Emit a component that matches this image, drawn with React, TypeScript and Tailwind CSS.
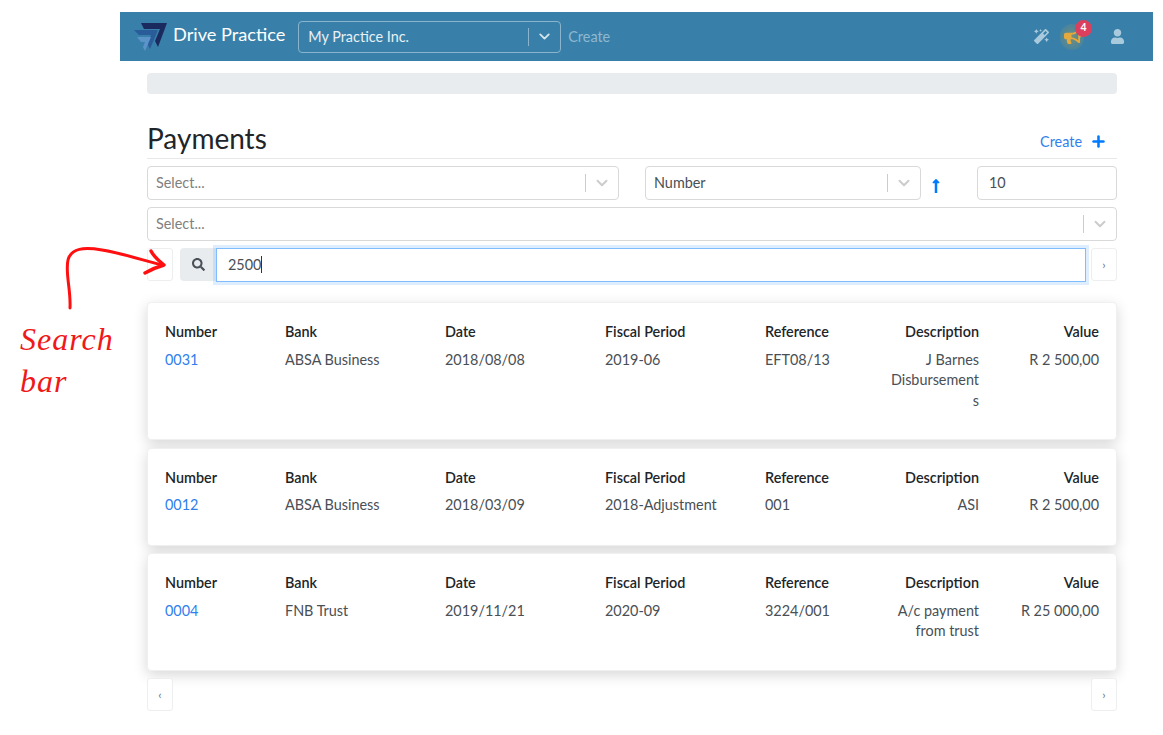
import React from "react";
import { ChevronDown, Plus } from "lucide-react";
import { FaMagic, FaBullhorn, FaUser, FaSearch, FaLongArrowAltUp } from "react-icons/fa";

function Logo() {
  return (
    <svg width="34" height="30" viewBox="0 0 34 30">
      <path d="M7 1 H33 L24 25 L21 19 L26 7 H10 Z" fill="#1a2a5e" />
      <path d="M0 8 H24 L16 27 L13 21 L17 13 H5 Z" fill="#2a5c9a" />
      <path d="M3 15 H17 L11 29 L9 25 L11 20 H7 Z" fill="#5c93c9" />
    </svg>
  );
}

function Select({ text, placeholder, className }: { text: string; placeholder?: boolean; className: string }) {
  return (
    <div className={`flex h-[34px] items-center rounded-[4px] border border-[#d9d9d9] bg-white pl-[8px] ${className}`}>
      <span className={`flex-1 text-[14.4px] ${placeholder ? "text-[#808080]" : "text-[#4a4f55]"}`}>{text}</span>
      <span className="h-[18px] w-px bg-[#cccccc]" />
      <span className="flex w-[32px] justify-center text-[#cccccc]">
        <ChevronDown size={18} strokeWidth={2.6} />
      </span>
    </div>
  );
}

function PageButton({ label, className = "" }: { label?: string; className?: string }) {
  return (
    <div className={`flex h-[33px] w-[26px] shrink-0 items-center justify-center rounded-[3px] border border-[#eceef0] bg-white text-[12px] text-[#6c757d] ${className}`}>
      {label}
    </div>
  );
}

type Row = { number: string; bank: string; date: string; period: string; reference: string; description: React.ReactNode; value: string; height: string };

const rows: Row[] = [
  { number: "0031", bank: "ABSA Business", date: "2018/08/08", period: "2019-06", reference: "EFT08/13", description: <>J Barnes<br />Disbursement<br />s</>, value: "R 2 500,00", height: "h-[138px]" },
  { number: "0012", bank: "ABSA Business", date: "2018/03/09", period: "2018-Adjustment", reference: "001", description: "ASI", value: "R 2 500,00", height: "h-[98px]" },
  { number: "0004", bank: "FNB Trust", date: "2019/11/21", period: "2020-09", reference: "3224/001", description: <>A/c payment<br />from trust</>, value: "R 25 000,00", height: "h-[118px]" },
];

function Card({ row }: { row: Row }) {
  const heading = "text-[14.4px] font-semibold text-[#212529]";
  const cell = "mt-[7px] text-[14.4px] leading-[20.5px] text-[#4a4f55]";
  return (
    <div className={`grid grid-cols-[120px_160px_160px_160px_120px_94px_120px] rounded-[4px] border border-[#eef0f2] bg-white px-[17px] pt-[18px] shadow-[0_4px_14px_rgba(0,0,0,0.16)] ${row.height}`}>
      <div><div className={heading}>Number</div><div className="mt-[7px] text-[14.4px] leading-[20.5px] text-[#2f7fee]">{row.number}</div></div>
      <div><div className={heading}>Bank</div><div className={cell}>{row.bank}</div></div>
      <div><div className={heading}>Date</div><div className={cell}>{row.date}</div></div>
      <div><div className={heading}>Fiscal Period</div><div className={cell}>{row.period}</div></div>
      <div><div className={heading}>Reference</div><div className={cell}>{row.reference}</div></div>
      <div className="text-right"><div className={heading}>Description</div><div className={cell}>{row.description}</div></div>
      <div className="text-right"><div className={heading}>Value</div><div className={cell}>{row.value}</div></div>
    </div>
  );
}

export default function App() {
  return (
    <div className="relative h-[735px] w-[1163px] overflow-hidden bg-white pl-[120px] pr-[10px] pt-[12px] font-['Lato','Noto_Sans',sans-serif]">
      <header className="flex h-[49px] items-center bg-[#3880a9] pl-[14px] pr-[28px]">
        <Logo />
        <span className="mb-[3px] ml-[5px] text-[18.2px] text-white">Drive Practice</span>
        <div className="ml-[13px] flex h-[32px] w-[263px] items-center rounded-[4px] border border-[#8ab4cd] pl-[9px]">
          <span className="flex-1 text-[14.4px] text-[#e8f0f5]">My Practice Inc.</span>
          <span className="h-[18px] w-px bg-[#8ab4cd]" />
          <span className="flex w-[31px] justify-center text-[#d5e4ee]"><ChevronDown size={17} strokeWidth={2.6} /></span>
        </div>
        <span className="ml-[7px] text-[14.4px] text-[#8fb8d0]">Create</span>
        <div className="ml-auto flex items-center">
          <FaMagic size={15} className="text-[#a9cadc]" />
          <div className="relative ml-[11px] flex h-[26px] w-[24px] items-center justify-center rounded-full bg-[radial-gradient(circle,rgba(225,170,50,0.35),rgba(225,170,50,0))]">
            <FaBullhorn size={17} className="text-[#e5a93c]" />
            <span className="absolute -right-[8px] -top-[4px] flex h-[17px] w-[17px] items-center justify-center rounded-full bg-[#dc3f5d] text-[10.5px] font-bold text-white">4</span>
          </div>
          <FaUser size={15} className="ml-[26px] text-[#a9cadc]" />
        </div>
      </header>

      <main className="ml-[27px] w-[970px]">
        <div className="mt-[12px] h-[21px] rounded-[4px] bg-[#e9ecef]" />

        <div className="mt-[25px] flex h-[40px] items-center justify-between border-b border-[#e6e8ea] pb-[2px]">
          <h1 className="text-[28px] leading-[34px] text-[#212529]">Payments</h1>
          <div className="mr-[10px] mt-[8px] flex items-center text-[14.4px] text-[#2f7fee]">
            Create
            <Plus size={17} strokeWidth={3.6} className="ml-[8px] text-[#007bff]" />
          </div>
        </div>

        <div className="mt-[7px] flex items-center">
          <Select text="Select..." placeholder className="w-[472px]" />
          <Select text="Number" className="ml-[26px] w-[276px]" />
          <span className="ml-[7px] mt-[6px] w-[32px] text-[#007bff]"><FaLongArrowAltUp size={16} /></span>
          <div className="ml-[17px] flex h-[34px] w-[140px] items-center rounded-[4px] border border-[#d9d9d9] pl-[11px] text-[14.4px] text-[#4a4f55]">10</div>
        </div>

        <Select text="Select..." placeholder className="mt-[7px] w-full" />

        <div className="mt-[7px] flex items-center">
          <PageButton />
          <div className="ml-[7px] flex h-[33px] flex-1 items-center">
            <div className="flex h-[33px] w-[36px] items-center justify-center rounded-l-[4px] bg-[#e9ecef] text-[#495057]">
              <FaSearch size={13} />
            </div>
            <div className="flex h-[34px] flex-1 items-center border border-[#80bdff] pl-[11px] text-[14.4px] text-[#4a4f55] shadow-[0_0_0_3px_rgba(0,123,255,0.13)]">
              2500<span className="h-[17px] w-px bg-[#333]" />
            </div>
          </div>
          <PageButton label="›" className="ml-[5px]" />
        </div>

        <div className="mt-[21px] flex flex-col gap-[7.5px]">
          {rows.map((r) => <Card key={r.number} row={r} />)}
        </div>

        <div className="mt-[7px] flex justify-between">
          <PageButton label="‹" />
          <PageButton label="›" />
        </div>
      </main>

      <svg className="absolute left-[60px] top-[240px]" width="112" height="72" viewBox="0 0 112 72" fill="none">
        <path d="M10 68 C11 50 5 32 8 20 C11 8 24 7 42 10 C62 13 85 21 102 25" stroke="#ff0f0f" strokeWidth="3" strokeLinecap="round" />
        <path d="M91 11 C94 17 99 21 104 25 C97 27 92 29 85 33" stroke="#ff0f0f" strokeWidth="3.4" strokeLinecap="round" strokeLinejoin="round" />
      </svg>
      <div className="absolute left-[20px] top-[318px] text-[32px] italic leading-[42px] tracking-[1px] text-[#f01818] font-['Liberation_Serif',serif]">
        Search<br />bar
      </div>
    </div>
  );
}
